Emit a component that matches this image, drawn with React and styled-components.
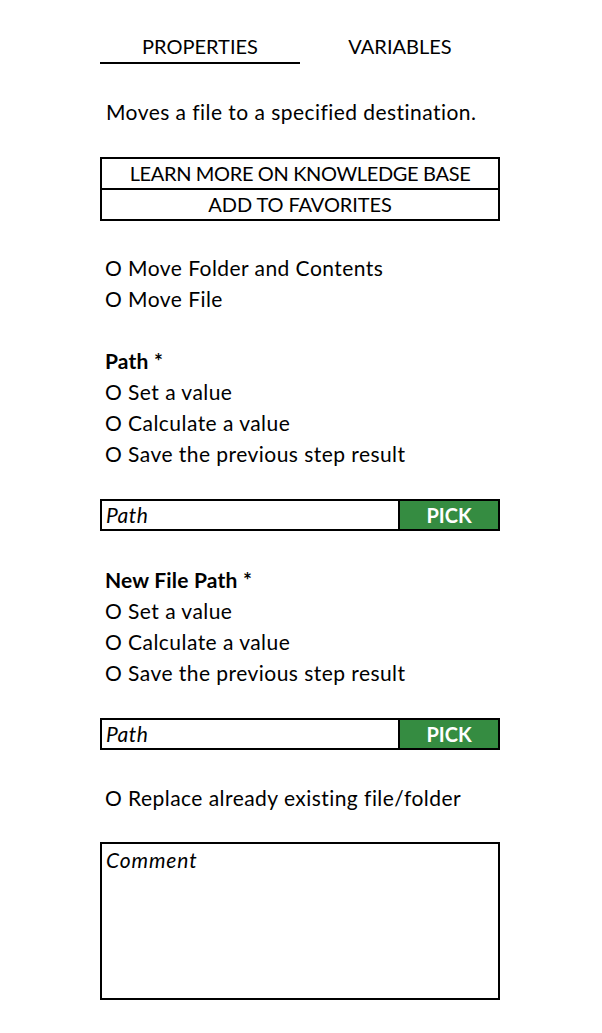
import React from "react";
import styled, { createGlobalStyle } from "styled-components";

// global
const GlobalStyle = createGlobalStyle`
  body {
    margin: 0;
    background: #ffffff;
    color: #000000;
    font-family: Lato, "Open Sans", "Liberation Sans", sans-serif;
  }
`;

// style
const Panel = styled.main`
  width: 400px;
  margin-left: 100px;
  padding-top: 32px;
  padding-bottom: 33px;
  font-size: 21px;
`;

const Tabs = styled.nav`
  display: flex;
`;

const Tab = styled.div`
  flex: 1;
  height: 30px;
  line-height: 29px;
  text-align: center;
  font-size: 20px;
  border-bottom: 2px solid ${({ $active }) => ($active ? "#000" : "transparent")};
`;

const Line = styled.div`
  height: 31px;
  line-height: 31px;
  padding-left: ${({ $indent }) => $indent ?? 5}px;
  margin-top: ${({ $gap }) => $gap ?? 0}px;
  font-weight: ${({ $bold }) => ($bold ? 700 : 400)};
  letter-spacing: ${({ $bold }) => ($bold ? 0.2 : 0.45)}px;
  white-space: nowrap;
`;

const LinkBox = styled.div`
  margin-top: 30px;
  border: 2px solid #000;
  display: flex;
  flex-direction: column;
`;

const LinkRow = styled.div`
  height: 29px;
  line-height: 29px;
  text-align: center;
  font-size: 20px;
  letter-spacing: ${({ $tight }) => ($tight ? -0.35 : -0.1)}px;
  & + & {
    border-top: 2px solid #000;
  }
`;

const Field = styled.div`
  margin-top: ${({ $gap }) => $gap}px;
  height: 32px;
  box-sizing: border-box;
  border: 2px solid #000;
  display: flex;
`;

const FieldInput = styled.div`
  flex: 1;
  padding-left: 4px;
  line-height: 28px;
  font-style: italic;
  letter-spacing: 0.5px;
`;

const PickButton = styled.div`
  width: 98px;
  border-left: 2px solid #000;
  background: #358c41;
  color: #ffffff;
  font-weight: 700;
  text-align: center;
  line-height: 28px;
  font-size: 20px;
`;

const CommentBox = styled.div`
  margin-top: 29px;
  height: 158px;
  box-sizing: border-box;
  border: 2px solid #000;
  padding-left: 4px;
  line-height: 31px;
  font-style: italic;
  letter-spacing: 0.9px;
`;

const HomeScreen = () => {
  const valueOptions = [
    "O Set a value",
    "O Calculate a value",
    "O Save the previous step result",
  ];

  return (
    <Panel>
      <Tabs>
        <Tab $active>PROPERTIES</Tab>
        <Tab>VARIABLES</Tab>
      </Tabs>
      <Line $gap={32} $indent={6}>
        Moves a file to a specified destination.
      </Line>
      <LinkBox>
        <LinkRow $tight>LEARN MORE ON KNOWLEDGE BASE</LinkRow>
        <LinkRow>ADD TO FAVORITES</LinkRow>
      </LinkBox>
      <Line $gap={31}>O Move Folder and Contents</Line>
      <Line>O Move File</Line>
      <Line $gap={31} $bold>
        Path *
      </Line>
      {valueOptions.map((opt) => (
        <Line key={"p" + opt}>{opt}</Line>
      ))}
      <Field $gap={30}>
        <FieldInput>Path</FieldInput>
        <PickButton>PICK</PickButton>
      </Field>
      <Line $gap={33} $bold>
        New File Path *
      </Line>
      {valueOptions.map((opt) => (
        <Line key={"n" + opt}>{opt}</Line>
      ))}
      <Field $gap={30}>
        <FieldInput>Path</FieldInput>
        <PickButton>PICK</PickButton>
      </Field>
      <Line $gap={32}>O Replace already existing file/folder</Line>
      <CommentBox>Comment</CommentBox>
    </Panel>
  );
};

const App = () => (
  <>
    <GlobalStyle />
    <HomeScreen />
  </>
);

export default App;
